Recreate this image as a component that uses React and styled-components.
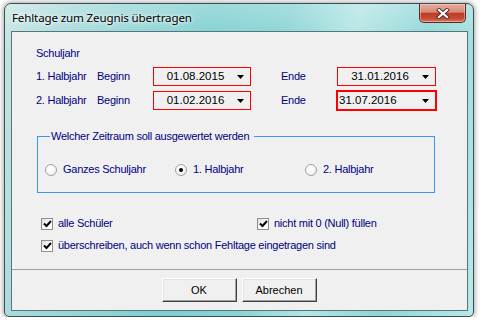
import React from 'react';
import styled, { createGlobalStyle } from 'styled-components';

const GlobalStyle = createGlobalStyle`
  html, body {
    margin: 0;
    background: #ffffff;
  }
  body {
    padding: 3px 0 0 4px;
    font-family: "Liberation Sans", Arial, sans-serif;
    font-size: 11px;
  }
  * { box-sizing: border-box; }
`;

const Window = styled.div`
  width: 470px;
  height: 314px;
  display: flex;
  flex-direction: column;
  padding: 0 5px 5px 6px;
  border: 1px solid #3b4f52;
  border-radius: 7px 7px 5px 5px;
  background:
    linear-gradient(180deg, rgba(255,255,255,0.25) 0%, rgba(255,255,255,0) 40px),
    linear-gradient(100deg, #c8e4e4 0%, #a6d9da 14%, #7ecfd1 40%, #8ad4d5 55%, #b4e5e5 68%, #8fd6d7 82%, #b8e8e8 100%);
  box-shadow: 0 0 5px 1px rgba(0, 0, 0, 0.35);
`;

const TitleBar = styled.div`
  height: 27px;
  display: flex;
  justify-content: space-between;
  align-items: flex-start;
  padding-left: 1px;
`;

const Title = styled.span`
  font-family: "Noto Sans", "Open Sans", sans-serif;
  font-size: 11.6px;
  letter-spacing: -0.15px;
  line-height: 16px;
  margin-top: 6px;
  color: #000;
  text-shadow: 0 0 6px #fff, 0 0 3px rgba(255,255,255,0.9);
`;

const CloseButton = styled.div`
  width: 47px;
  height: 19px;
  margin-right: 2px;
  border: 1px solid #5e2a24;
  border-top: none;
  border-radius: 0 0 5px 5px;
  background: linear-gradient(180deg, #e6ada0 0%, #d98a78 45%, #bf3d28 52%, #c84a33 80%, #dc7a5e 100%);
  box-shadow: inset 0 0 0 1px rgba(255, 220, 210, 0.45);
  display: flex;
  align-items: center;
  justify-content: center;
`;

const Client = styled.div`
  flex: 1;
  display: flex;
  flex-direction: column;
  background: #f0f0f0;
  border: 1px solid #56777a;
`;

const Content = styled.div`
  flex: 1;
  padding: 15px 0 0 24px;
`;

const Text = styled.span`
  color: #000080;
  line-height: 13px;
  letter-spacing: -0.25px;
  white-space: nowrap;
`;

const Heading = styled(Text)`
  display: block;
  height: 13px;
`;

const DateRow = styled.div`
  display: flex;
  align-items: center;
  height: 19px;
  margin-top: ${p => p.$top}px;
`;

const Label = styled(Text)`
  display: inline-block;
  width: ${p => p.$w}px;
  flex: none;
`;

const DateBox = styled.div`
  flex: none;
  width: ${p => p.$w}px;
  height: ${p => p.$bold ? 21 : 19}px;
  border-style: solid;
  border-color: #ff0000;
  border-width: ${p => p.$bold ? 2 : 1}px;
  margin-left: ${p => p.$bold ? -1 : 0}px;
  display: flex;
  align-items: center;
  padding: 0 6px 0 ${p => p.$bold ? 1 : 0}px;
  color: #000;
`;

const DateValue = styled.span`
  flex: 1;
  text-align: ${p => p.$left ? 'left' : 'center'};
  line-height: 13px;
  font-size: 11.5px;
`;

const Spacer = styled.div`
  width: ${p => p.$w}px;
  flex: none;
`;

const GroupBox = styled.div`
  width: 398px;
  height: 57px;
  margin: 26px 0 0 1px;
  border: 1px solid #3a97f5;
  padding: 0 0 0 7px;
`;

const Legend = styled(Text)`
  display: block;
  width: fit-content;
  height: 13px;
  margin: -7px 0 0 5px;
  padding: 0 5px 0 1px;
  background: #f0f0f0;
`;

const RadioRow = styled.div`
  display: grid;
  grid-template-columns: 130px 130px auto;
  margin-top: 20px;
`;

const Option = styled.div`
  display: flex;
  align-items: center;
  gap: ${p => p.$gap}px;
  height: 13px;
`;

const RadioCircle = styled.span`
  width: 12px;
  height: 12px;
  border-radius: 50%;
  border: 1px solid #a3a3a3;
  background: radial-gradient(circle at 40% 35%, #ffffff 0%, #f4f4f4 60%, #dcdcdc 100%);
  display: flex;
  align-items: center;
  justify-content: center;
  flex: none;

  &::after {
    content: '';
    width: 4px;
    height: 4px;
    border-radius: 50%;
    background: #000;
    display: ${p => p.$checked ? 'block' : 'none'};
  }
`;

const CheckRows = styled.div`
  margin: 24px 0 0 5px;
  display: flex;
  flex-direction: column;
  gap: 9px;
`;

const CheckLine = styled.div`
  display: grid;
  grid-template-columns: 216px auto;
`;

const CheckBox = styled.span`
  width: 12px;
  height: 12px;
  border: 1px solid #8f8f8f;
  background: linear-gradient(135deg, #dcdcdc 0%, #ffffff 60%);
  display: flex;
  align-items: center;
  justify-content: center;
  flex: none;
`;

const Footer = styled.div`
  height: 41px;
  border-top: 1px solid #a0a0a0;
  display: flex;
  justify-content: center;
  gap: 5px;
  padding: 8px 1px 0 0;
`;

const Button = styled.button`
  width: 75px;
  height: 24px;
  font-family: "Liberation Sans", Arial, sans-serif;
  font-size: 11px;
  color: #000;
  background: #f0f0f0;
  border: none;
  border-top: 1px solid #ffffff;
  border-left: 1px solid #ffffff;
  border-right: 1px solid #404040;
  border-bottom: 1px solid #404040;
  box-shadow: inset -1px -1px 0 #a0a0a0, inset 1px 1px 0 #e3e3e3;
  padding: 0;
`;

function Arrow() {
  return (
    <svg width="7" height="4" viewBox="0 0 7 4">
      <polygon points="0,0 7,0 3.5,4" fill="#000" />
    </svg>
  );
}

function Tick() {
  return (
    <svg width="9" height="8" viewBox="0 0 9 8">
      <path d="M1 3.5 L3.5 6 L8 1" fill="none" stroke="#000" strokeWidth="2" />
    </svg>
  );
}

function CloseGlyph() {
  return (
    <svg width="14" height="11" viewBox="0 0 14 11">
      <path d="M3 2 L11 9 M11 2 L3 9" stroke="#4a2a28" strokeWidth="4" strokeLinecap="square" />
      <path d="M3 2 L11 9 M11 2 L3 9" stroke="#ffffff" strokeWidth="2.2" strokeLinecap="square" />
    </svg>
  );
}

function DateField({ value, width, bold }) {
  return (
    <DateBox $w={width} $bold={bold}>
      <DateValue $left={bold}>{value}</DateValue>
      <Arrow />
    </DateBox>
  );
}

function Check({ children }) {
  return (
    <Option $gap={5}>
      <CheckBox><Tick /></CheckBox>
      <Text>{children}</Text>
    </Option>
  );
}

export default function App() {
  return (
    <>
      <GlobalStyle />
      <Window>
        <TitleBar>
          <Title>Fehltage zum Zeugnis übertragen</Title>
          <CloseButton><CloseGlyph /></CloseButton>
        </TitleBar>
        <Client>
          <Content>
            <Heading>Schuljahr</Heading>
            <DateRow $top={7}>
              <Label $w={61}>1. Halbjahr</Label>
              <Label $w={56}>Beginn</Label>
              <DateField value="01.08.2015" width={98} />
              <Spacer $w={30} />
              <Label $w={56}>Ende</Label>
              <DateField value="31.01.2016" width={99} />
            </DateRow>
            <DateRow $top={5}>
              <Label $w={61}>2. Halbjahr</Label>
              <Label $w={56}>Beginn</Label>
              <DateField value="01.02.2016" width={98} />
              <Spacer $w={30} />
              <Label $w={56}>Ende</Label>
              <DateField value="31.07.2016" width={101} bold />
            </DateRow>
            <GroupBox>
              <Legend>Welcher Zeitraum soll ausgewertet werden</Legend>
              <RadioRow>
                <Option $gap={6}><RadioCircle /><Text>Ganzes Schuljahr</Text></Option>
                <Option $gap={6}><RadioCircle $checked /><Text>1. Halbjahr</Text></Option>
                <Option $gap={6}><RadioCircle /><Text>2. Halbjahr</Text></Option>
              </RadioRow>
            </GroupBox>
            <CheckRows>
              <CheckLine>
                <Check>alle Schüler</Check>
                <Check>nicht mit 0 (Null) füllen</Check>
              </CheckLine>
              <Check>überschreiben, auch wenn schon Fehltage eingetragen sind</Check>
            </CheckRows>
          </Content>
          <Footer>
            <Button>OK</Button>
            <Button>Abrechen</Button>
          </Footer>
        </Client>
      </Window>
    </>
  );
}
